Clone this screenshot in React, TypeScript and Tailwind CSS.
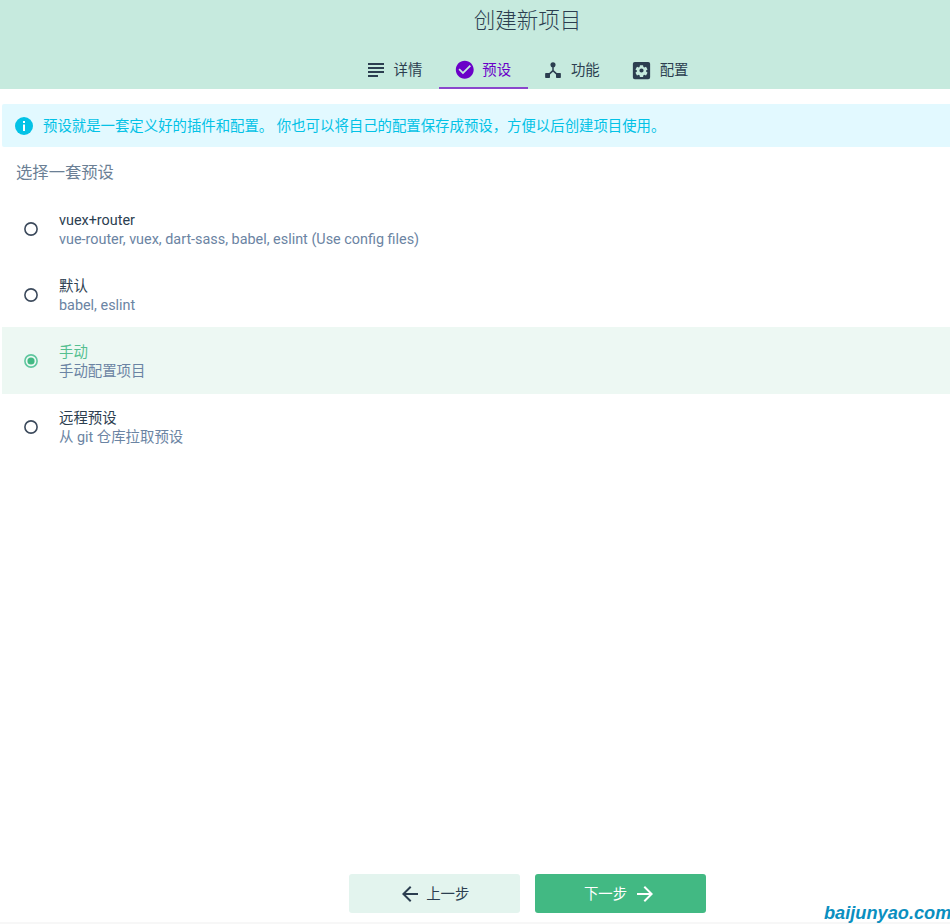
import React from "react";

function DetailsIcon() {
  return (
    <svg viewBox="0 0 24 24" className="w-[24px] h-[24px]" fill="#2c3e50">
      <path d="M14 17H4v2h10v-2zm6-8H4v2h16V9zM4 15h16v-2H4v2zM4 5v2h16V5H4z" />
    </svg>
  );
}
function CheckCircleIcon() {
  return (
    <svg viewBox="0 0 24 24" className="w-[19.5px] h-[19.5px]" fill="#6a00c8">
      <path d="M12 2C6.48 2 2 6.48 2 12s4.48 10 10 10 10-4.48 10-10S17.52 2 12 2zm-2 15l-5-5 1.41-1.41L10 14.17l7.59-7.59L19 8l-9 9z" transform="translate(-1.2 -1.2) scale(1.1)" />
    </svg>
  );
}
function TreeIcon() {
  return (
    <svg viewBox="0 0 24 24" className="w-[18px] h-[18px]" fill="#2c3e50">
      <circle cx="12" cy="5" r="3.4" />
      <rect x="1.5" y="16" width="6.5" height="6.5" rx="1" />
      <rect x="16" y="16" width="6.5" height="6.5" rx="1" />
      <path d="M11 7h2v5.4l5.2 4.6-1.4 1.5L12 14.3l-4.8 4.2-1.4-1.5 5.2-4.6z" />
    </svg>
  );
}
function SettingsBoxIcon() {
  return (
    <svg viewBox="0 0 24 24" className="w-[23px] h-[23px]" fill="#2c3e50">
      <path
        fillRule="evenodd"
        d="M5 3h14a2 2 0 0 1 2 2v14a2 2 0 0 1-2 2H5a2 2 0 0 1-2-2V5a2 2 0 0 1 2-2zm8.6 3.5h-3.2l-.4 1.9-.9.5-1.8-.7-1.6 2.7 1.5 1.2v1l-1.5 1.3 1.6 2.7 1.8-.7.9.5.4 1.9h3.2l.4-1.9.9-.5 1.8.7 1.6-2.7-1.5-1.3v-1l1.5-1.2-1.6-2.7-1.8.7-.9-.5-.4-1.9zM12 9.8a2.2 2.2 0 1 1 0 4.4 2.2 2.2 0 0 1 0-4.4z"
      />
    </svg>
  );
}

function Tab({ icon, label, active }: { icon: React.ReactNode; label: string; active?: boolean }) {
  return (
    <div
      className={
        "w-[88.7px] h-[36px] pr-[4px] flex items-center justify-center gap-[6px] text-[14.4px] border-b-2 " +
        (active ? "border-[#8a46cc] text-[#6a00c8]" : "border-transparent text-[#2c3e50]")
      }
    >
      <span className="w-[24px] h-[24px] flex items-center justify-center">{icon}</span>
      <span className="pt-[1px]">{label}</span>
    </div>
  );
}

function Radio({ selected }: { selected?: boolean }) {
  return (
    <svg viewBox="0 0 14 14" className="w-[14px] h-[14px] shrink-0">
      <circle cx="7" cy="7" r="6.1" fill="none" stroke={selected ? "#5fc79e" : "#3c4a5c"} strokeWidth="1.6" />
      {selected && <circle cx="7" cy="7" r="3.6" fill="#42b983" />}
    </svg>
  );
}

function Preset({ name, desc, selected }: { name: string; desc: string; selected?: boolean }) {
  return (
    <div className={"flex items-center pl-[22px] " + (selected ? "h-[67px] -mt-[1px] pt-[1px] bg-[#edf8f3]" : "h-[66px]")}>
      <Radio selected={selected} />
      <div className="ml-[21px] pt-[3px] text-[14.4px] leading-[18.4px]">
        <div className={selected ? "text-[#55bf90]" : "text-[#2c3e50]"}>{name}</div>
        <div className="text-[#6b84a3]">{desc}</div>
      </div>
    </div>
  );
}

export default function App() {
  return (
    <div className="w-[950px] h-[924px] relative overflow-hidden bg-white">
      <div
        className="w-[1056px] h-[924px] flex flex-col"
        style={{ fontFamily: 'Roboto, "Noto Sans CJK SC", sans-serif' }}
      >
        <header className="h-[89px] bg-[#c6eade] flex flex-col items-center shrink-0">
          <h1 className="mt-[6px] pr-[1px] text-[21.5px] leading-[30px] text-[#2c3e50] font-light">创建新项目</h1>
          <nav className="mt-auto flex">
            <Tab icon={<DetailsIcon />} label="详情" />
            <Tab icon={<CheckCircleIcon />} label="预设" active />
            <Tab icon={<TreeIcon />} label="功能" />
            <Tab icon={<SettingsBoxIcon />} label="配置" />
          </nav>
        </header>

        <main className="flex-1 pt-[15px] pl-[2px] flex flex-col">
          <div className="h-[43px] bg-[#e2f9ff] rounded-[2px] flex items-center pl-[13px] gap-[10px] text-[14.4px] text-[#03c2e6]">
            <svg viewBox="0 0 18 18" className="w-[18px] h-[18px] shrink-0">
              <circle cx="9" cy="9" r="9" fill="#03c2e6" />
              <rect x="8" y="4" width="2" height="2" fill="#fff" />
              <rect x="8" y="7.5" width="2" height="6.5" fill="#fff" />
            </svg>
            <span className="pt-[2px]">预设就是一套定义好的插件和配置。 你也可以将自己的配置保存成预设，方便以后创建项目使用。</span>
          </div>
          <div className="mt-[14px] ml-[14px] h-[24px] leading-[24px] text-[16.32px] text-[#6b7f95]">选择一套预设</div>
          <div className="mt-[11px] flex flex-col">
            <Preset name="vuex+router" desc="vue-router, vuex, dart-sass, babel, eslint (Use config files)" />
            <Preset name="默认" desc="babel, eslint" />
            <Preset name="手动" desc="手动配置项目" selected />
            <Preset name="远程预设" desc="从 git 仓库拉取预设" />
          </div>

          <div className="mt-auto mb-[11px] flex justify-center gap-[15px] pr-[3px]">
            <button className="w-[171px] h-[39px] pr-[2px] rounded-[3px] bg-[#e3f4ee] text-[#2c3e50] text-[14.4px] flex items-center justify-center gap-[4.5px]">
              <svg viewBox="0 0 24 24" className="w-[24px] h-[24px]" fill="#2c3e50">
                <path d="M20 11H7.83l5.59-5.59L12 4l-8 8 8 8 1.41-1.41L7.83 13H20v-2z" />
              </svg>
              <span className="pt-[2px]">上一步</span>
            </button>
            <button className="w-[171px] h-[39px] rounded-[3px] bg-[#42b983] text-white text-[14.4px] flex items-center justify-center gap-[6px]">
              <span className="pt-[2px]">下一步</span>
              <svg viewBox="0 0 24 24" className="w-[24px] h-[24px]" fill="#ffffff">
                <path d="M12 4l-1.41 1.41L16.17 11H4v2h12.17l-5.58 5.59L12 20l8-8z" />
              </svg>
            </button>
          </div>
        </main>
      </div>

      <div className="absolute bottom-0 left-0 right-0 h-[2px] bg-[#f7f7f7]" />
      <div
        className="absolute left-[824px] top-[901px] text-[18.2px] leading-[24px] font-bold italic text-[#0a8fc0] whitespace-nowrap"
        style={{ fontFamily: '"Liberation Sans", sans-serif' }}
      >
        baijunyao.com
      </div>
    </div>
  );
}
